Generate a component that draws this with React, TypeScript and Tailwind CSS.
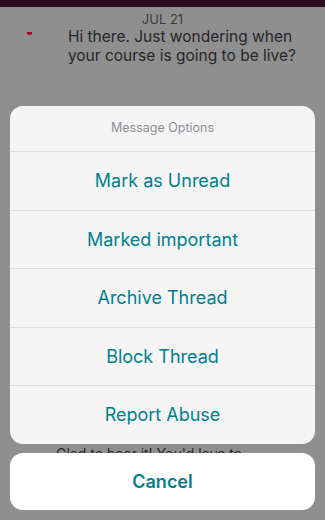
import React from 'react';

const options = ['Mark as Unread', 'Marked important', 'Archive Thread', 'Block Thread', 'Report Abuse'];

export default function App() {
  return (
    <div
      className="relative w-[325px] h-[520px] overflow-hidden bg-[#8f8f8f]"
      style={{ fontFamily: 'Inter, "Noto Sans", sans-serif' }}
    >
      {/* thread behind the dimmed overlay */}
      <div className="h-[7px] bg-[#2a0a1e]" />
      <div className="pt-[5px] text-center text-[13px] leading-[15px] text-[#3a3a3a]">JUL 21</div>
      <div className="flex pl-[27px] pr-2">
        <div className="mt-[5px] w-[9px] h-[3px] rounded-b-full bg-[#b0001e]" />
        <p className="ml-[36px] text-[15.5px] leading-[19px] text-[#262626]">
          Hi there. Just wondering when your course is going to be live?
        </p>
      </div>
      <p className="mt-[380px] ml-[56px] text-[14px] leading-[18px] text-[#2a2a2a]">
        Glad to hear it! You'd love to
      </p>

      {/* action sheet */}
      <div className="absolute left-[10px] right-[10px] top-[106px] flex flex-col gap-[9px]">
        <div className="rounded-[13px] overflow-hidden bg-[#f5f5f5]">
          <div className="h-[45px] flex items-center justify-center text-[12.5px] text-[#8e8e93]">
            Message Options
          </div>
          {options.map((o) => (
            <div
              key={o}
              className="h-[58.5px] flex items-center justify-center border-t border-[#dcdcdc] text-[18px] text-[#00808c]"
            >
              {o}
            </div>
          ))}
        </div>
        <div className="h-[57px] rounded-[13px] bg-white flex items-center justify-center text-[18px] font-semibold text-[#00808c]">
          Cancel
        </div>
      </div>
    </div>
  );
}
